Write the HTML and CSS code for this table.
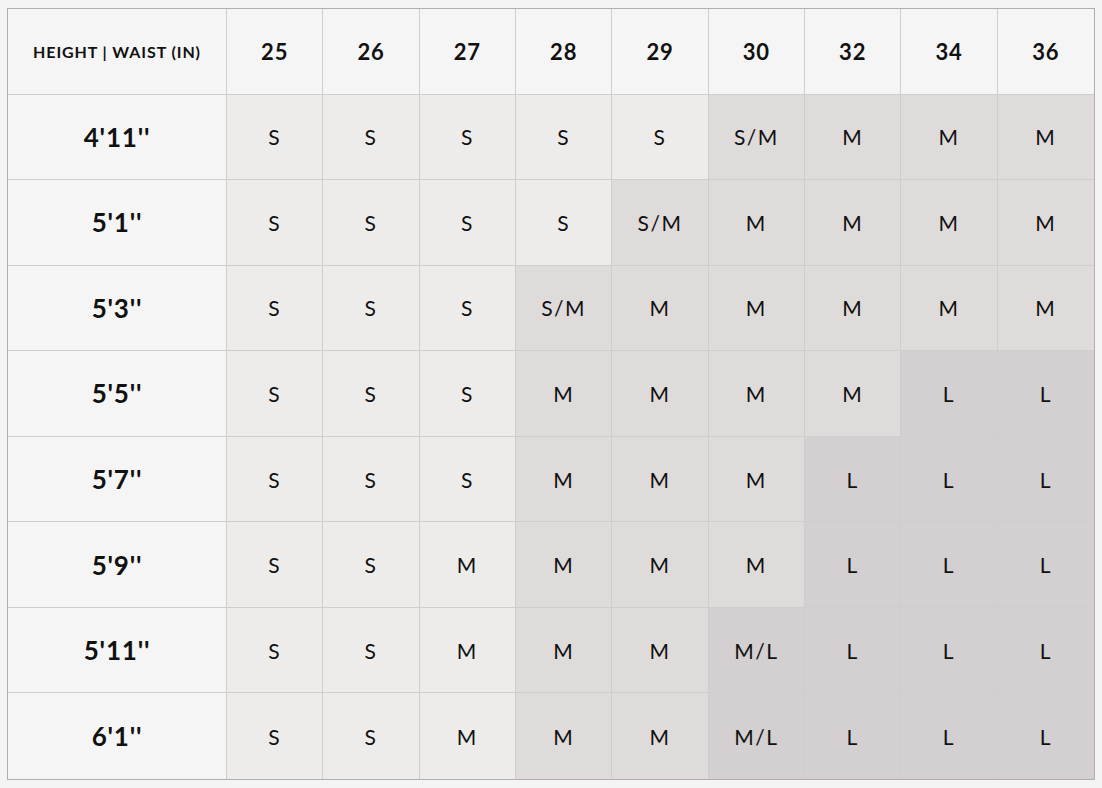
FILE: index.html
```
<!DOCTYPE html>
<html lang="en">
<head>
<meta charset="utf-8">
<title>Size chart</title>
<link rel="stylesheet" href="styles.css">
</head>
<body>
<div class="chart">
  <div class="head corner">HEIGHT | WAIST (IN)</div>
  <div class="head">25</div><div class="head">26</div><div class="head">27</div><div class="head">28</div><div class="head">29</div><div class="head">30</div><div class="head">32</div><div class="head">34</div><div class="head">36</div>

  <div class="ht">4'11''</div>
  <div class="c s">S</div><div class="c s">S</div><div class="c s">S</div><div class="c s">S</div><div class="c s">S</div><div class="c m">S/M</div><div class="c m">M</div><div class="c m">M</div><div class="c m">M</div>

  <div class="ht">5'1''</div>
  <div class="c s">S</div><div class="c s">S</div><div class="c s">S</div><div class="c s">S</div><div class="c m">S/M</div><div class="c m">M</div><div class="c m">M</div><div class="c m">M</div><div class="c m">M</div>

  <div class="ht">5'3''</div>
  <div class="c s">S</div><div class="c s">S</div><div class="c s">S</div><div class="c m">S/M</div><div class="c m">M</div><div class="c m">M</div><div class="c m">M</div><div class="c m">M</div><div class="c m">M</div>

  <div class="ht">5'5''</div>
  <div class="c s">S</div><div class="c s">S</div><div class="c s">S</div><div class="c m">M</div><div class="c m">M</div><div class="c m">M</div><div class="c m">M</div><div class="c l">L</div><div class="c l">L</div>

  <div class="ht">5'7''</div>
  <div class="c s">S</div><div class="c s">S</div><div class="c s">S</div><div class="c m">M</div><div class="c m">M</div><div class="c m">M</div><div class="c l">L</div><div class="c l">L</div><div class="c l">L</div>

  <div class="ht">5'9''</div>
  <div class="c s">S</div><div class="c s">S</div><div class="c s">M</div><div class="c m">M</div><div class="c m">M</div><div class="c m">M</div><div class="c l">L</div><div class="c l">L</div><div class="c l">L</div>

  <div class="ht">5'11''</div>
  <div class="c s">S</div><div class="c s">S</div><div class="c s">M</div><div class="c m">M</div><div class="c m">M</div><div class="c l">M/L</div><div class="c l">L</div><div class="c l">L</div><div class="c l">L</div>

  <div class="ht">6'1''</div>
  <div class="c s">S</div><div class="c s">S</div><div class="c s">M</div><div class="c m">M</div><div class="c m">M</div><div class="c l">M/L</div><div class="c l">L</div><div class="c l">L</div><div class="c l">L</div>
</div>
</body>
</html>
```

FILE: styles.css
```
html, body {
  margin: 0;
  padding: 0;
  background: #f5f4f4;
}

body {
  padding: 8px 0 0 7px;
  font-family: Lato, "Liberation Sans", sans-serif;
  color: #111;
}

.chart {
  width: 1088px;
  height: 772px;
  box-sizing: border-box;
  border: 1px solid #b3aeae;
  display: grid;
  grid-template-columns: 219px repeat(9, 1fr);
  grid-template-rows: repeat(9, 1fr);
  background: #f6f5f5;
}

.chart > div {
  display: flex;
  align-items: center;
  justify-content: center;
  border-right: 1px solid #d1cdcd;
  border-bottom: 1px solid #d1cdcd;
}

.chart > div:nth-child(10n) {
  border-right: none;
}

.chart > div:nth-last-child(-n+10) {
  border-bottom: none;
}

.head {
  background: #f6f5f5;
  font-size: 22px;
  font-weight: 700;
  letter-spacing: 0.8px;
}

.corner {
  font-size: 16px;
  font-weight: 700;
  letter-spacing: 0.9px;
}

.ht {
  background: #f6f5f5;
  font-size: 26px;
  font-weight: 700;
  letter-spacing: 0.8px;
}

.c {
  font-size: 21px;
  font-weight: 400;
  letter-spacing: 1.5px;
}

.s { background: #edeceb; }
.m { background: #dfdbdb; }
.l { background: #d4cfd0; }
```
